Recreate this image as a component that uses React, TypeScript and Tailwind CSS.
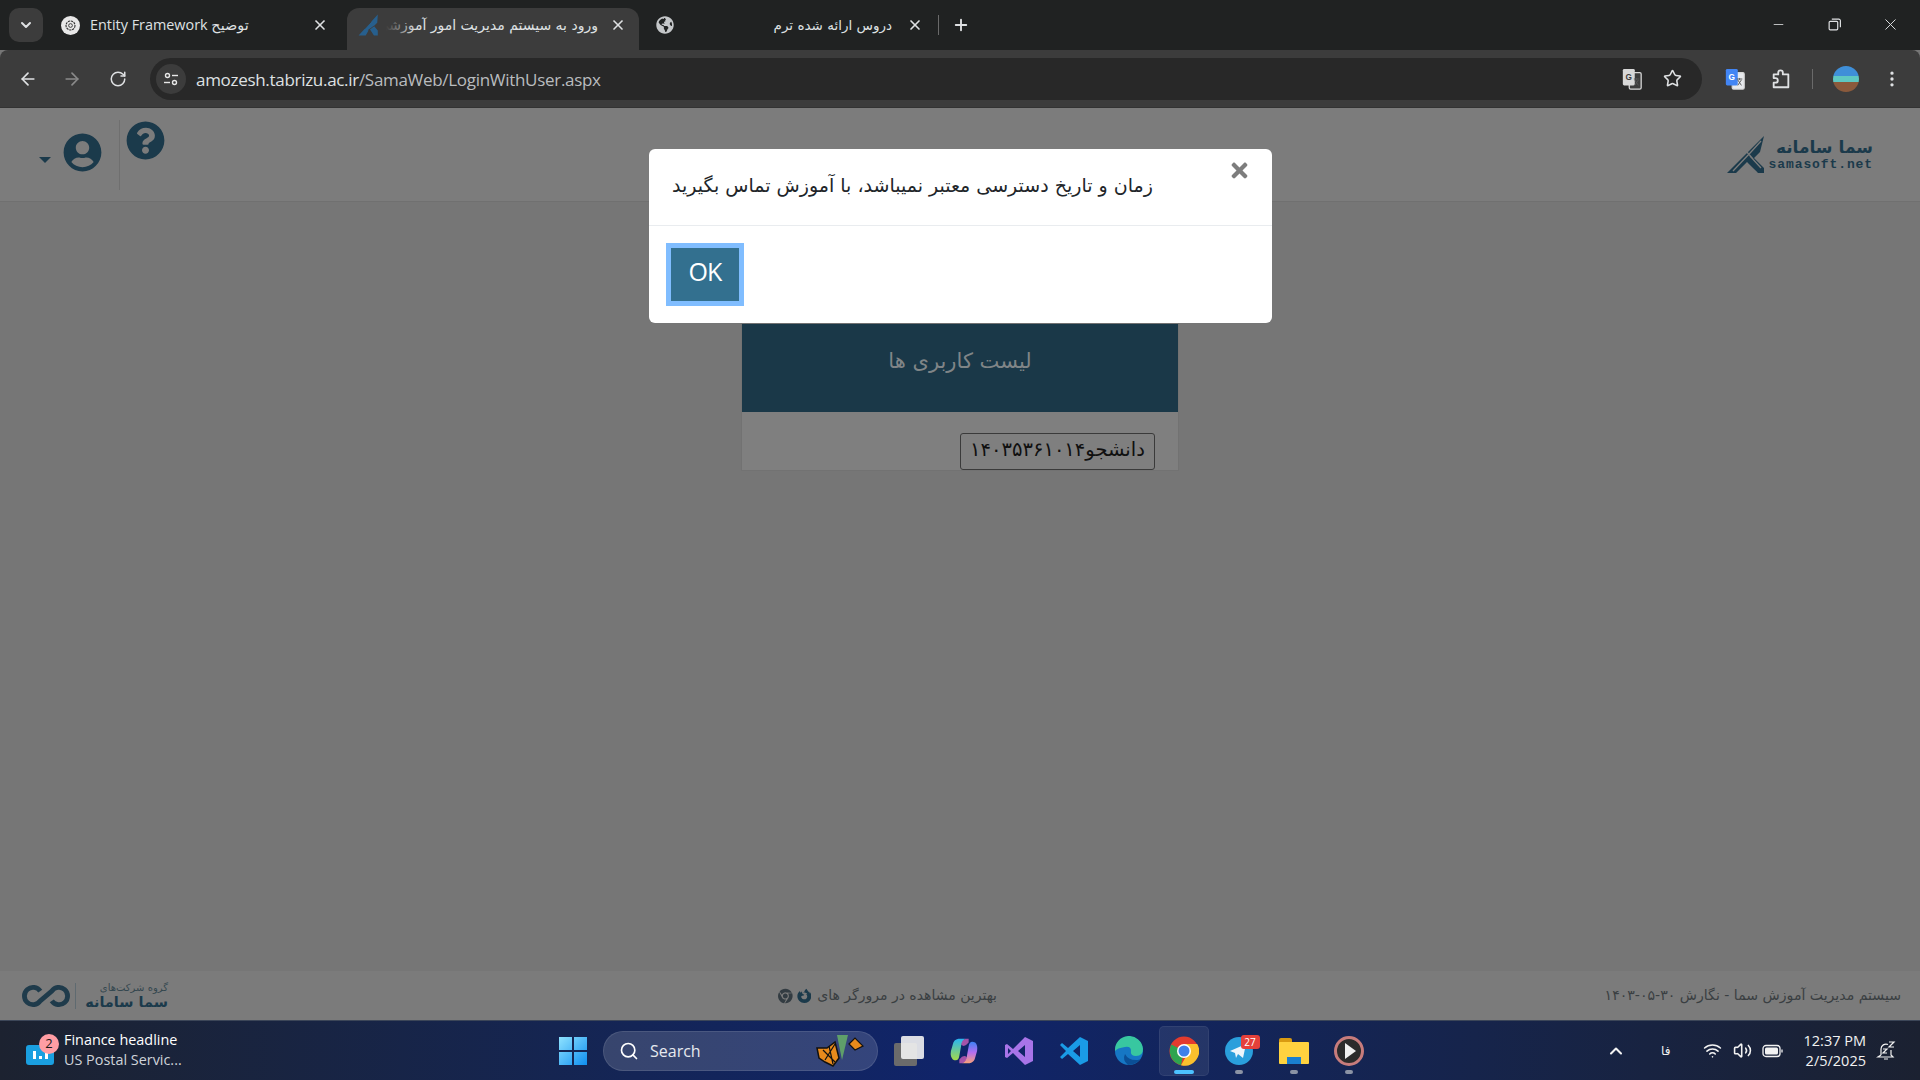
import React from "react";
import { ArrowLeft, ArrowRight, RotateCw, Star, EllipsisVertical, X, Plus, Minus, ChevronDown, ChevronUp, Wifi, Volume2, Search } from "lucide-react";
import { FaUserCircle, FaQuestionCircle, FaTimes, FaChrome, FaGlobeAmericas, FaFirefoxBrowser } from "react-icons/fa";

const fa = { fontFamily: '"DejaVu Sans", sans-serif' };
const ui = { fontFamily: '"Open Sans", "Noto Sans", sans-serif' };
const mixed = { fontFamily: '"Open Sans", "DejaVu Sans", sans-serif' };

const SamaMark = ({ color, gap }: { color: string; gap: string }) => (
  <svg viewBox="0 0 42 40" className="w-full h-full">
    <path d="M1 38 L22 17 L38 1 L34 17 L28 23 L38 33 L38 38 L32 38 L21 27 L10 38 Z" fill={color} />
    <path d="M7 36 L25 17 L35 6 M14 36 L21 29 L31 38 M24 21 L35 33 M20 16 L27 24" stroke={gap} strokeWidth="1.3" fill="none" />
  </svg>
);

const TranslateIcon = ({ blue }: { blue?: boolean }) => (
  <svg viewBox="0 0 24 24" className="w-[22px] h-[22px]">
    <rect x="9" y="5" width="13" height="18" rx="1.5" fill={blue ? "#e8eaed" : "#3c3c3c"} stroke="#d8d8d8" strokeWidth="1.4" />
    <rect x="2" y="1" width="13" height="18" rx="1.5" fill={blue ? "#4285f4" : "#d8d8d8"} />
    <text x="8.5" y="13" textAnchor="middle" fontSize="9" fontWeight="700" fill={blue ? "#fff" : "#3c3c3c"} fontFamily="Liberation Sans">G</text>
    <path d="M14 12 h6 M17 11 v2 M19 13 l-4 6 M15 13 l4 6" stroke="#555" strokeWidth="1" fill="none" />
  </svg>
);

const Dot = ({ active }: { active?: boolean }) => (
  <span className={active ? "w-[20px] h-[4px] rounded-full bg-[#4cc2ff] mt-[3px]" : "w-[8px] h-[4px] rounded-full bg-[#8b93a5] mt-[3px]"} />
);

const TaskIcon = ({ children, active, dot }: { children: React.ReactNode; active?: boolean; dot?: boolean }) => (
  <div className={"w-[50px] h-[50px] mx-[2.5px] flex flex-col items-center justify-end rounded-[5px] border " + (active ? "bg-[#ffffff14] border-[#ffffff10]" : "border-transparent")}>
    <div className="w-[30px] h-[32px] flex items-center justify-center">{children}</div>
    {active || dot ? <Dot active={active} /> : <span className="h-[7px]" />}
    <span className="h-[1px]" />
  </div>
);

export default function App() {
  return (
    <div className="relative w-[1920px] h-[1080px] overflow-hidden flex flex-col bg-[#767676]" style={ui}>
      {/* tab strip */}
      <div className="h-[50px] bg-[#202222] flex items-start text-[#dfe1e3] text-[14px]">
        <div className="ml-[9px] mt-[8px] w-[34px] h-[34px] rounded-[10px] bg-[#3c3c3c] flex items-center justify-center">
          <ChevronDown size={16} strokeWidth={3} />
        </div>
        <div className="ml-[4px] w-[300px] h-[50px] pt-[8px]">
          <div className="h-[34px] flex items-center pl-[14px]">
            <span className="w-[19px] h-[19px] rounded-full bg-[#e8e8e8] flex items-center justify-center shrink-0">
              <svg viewBox="0 0 20 20" className="w-[15px] h-[15px]"><circle cx="10" cy="10" r="6" fill="none" stroke="#333" strokeWidth="1.5" strokeDasharray="3 1" /><circle cx="10" cy="10" r="2.5" fill="none" stroke="#333" strokeWidth="1.2" /></svg>
            </span>
            <span dir="rtl" className="ml-[10px] w-[170px] text-left text-[14.4px] whitespace-nowrap" style={mixed}>توضیح Entity Framework</span>
            <X size={16} strokeWidth={2.5} className="ml-[52px] shrink-0" />
          </div>
        </div>
        <div className="w-[292px] h-[42px] mt-[8px] pb-[8px] bg-[#3c3c3c] rounded-t-[12px] flex items-center pl-[11px]">
          <svg viewBox="0 0 40 40" className="w-[22px] h-[22px] shrink-0 opacity-70">
            <path d="M1 39 L24 14 L36 1 L35 16 L29 22 L36 30 L36 39 L29 39 L21 27 L14 39 L8 39 Z" fill="#1f6fb0" />
            <path d="M12 27 L24 14 M18 30 L29 22" stroke="#3c3c3c" strokeWidth="1.5" />
          </svg>
          <div className="relative ml-[6px] w-[212px] overflow-hidden whitespace-nowrap">
            <div dir="rtl" className="text-[14px]" style={fa}>ورود به سیستم مدیریت امور آموزشی سما</div>
            <div className="absolute left-0 top-0 bottom-0 w-[30px] bg-gradient-to-r from-[#3c3c3c] to-transparent" />
          </div>
          <X size={16} strokeWidth={2.5} className="ml-[12px] shrink-0" />
        </div>
        <div className="w-[296px] h-[42px] mt-[8px] pb-[8px] flex items-center pl-[17px]">
          <FaGlobeAmericas size={18} className="text-[#c4c7c9] shrink-0" />
          <div dir="rtl" className="w-[218px] text-[13.5px] whitespace-nowrap" style={fa}>دروس ارائه شده ترم</div>
          <X size={16} strokeWidth={2.5} className="ml-[15px] shrink-0" />
        </div>
        <span className="w-px h-[20px] mt-[15px] ml-[3px] bg-[#6a6a6a]" />
        <Plus size={18} strokeWidth={2.5} className="ml-[13px] mt-[16px]" />
        <div className="ml-auto h-[50px] flex items-center pb-[2px] pr-[20px]">
          <Minus size={15} strokeWidth={1.3} className="-ml-[2px]" />
          <svg viewBox="0 0 14 14" className="w-[15px] h-[15px] ml-[41px]" fill="none" stroke="#dfe1e3" strokeWidth="1.1">
            <rect x="2" y="4" width="8" height="8" rx="1" />
            <path d="M4.5 2 H11 a1.5 1.5 0 0 1 1.5 1.5 V9.5" />
          </svg>
          <X size={19} strokeWidth={1.2} className="ml-[39px]" />
        </div>
      </div>

      {/* toolbar */}
      <div className="h-[58px] bg-[#3c3c3c] rounded-t-[8px] flex items-center text-[#dfe1e3] border-b border-[#333]">
        <ArrowLeft size={20} className="ml-[18px]" />
        <ArrowRight size={20} className="ml-[24px] text-[#8a8a8a]" />
        <RotateCw size={18} className="ml-[27px]" />
        <div className="ml-[23px] w-[1552px] h-[42px] rounded-full bg-[#282828] flex items-center pl-[6px] pr-[20px]">
          <span className="w-[30px] h-[30px] rounded-full bg-[#3c3c3c] flex items-center justify-center">
            <svg viewBox="0 0 16 16" className="w-[16px] h-[16px]" fill="none" stroke="#e8e8e8" strokeWidth="1.4">
              <circle cx="4.5" cy="4.5" r="2" /><path d="M9 4.5 H15" /><circle cx="11.5" cy="11.5" r="2" /><path d="M1 11.5 H7" />
            </svg>
          </span>
          <span className="ml-[10px] mt-[2px] text-[17px] tracking-[-0.3px]">
            amozesh.tabrizu.ac.ir<span className="text-[#b9bcbf]">/SamaWeb/LoginWithUser.aspx</span>
          </span>
          <div className="ml-auto flex items-center">
            <TranslateIcon />
            <Star size={19} className="ml-[20px]" />
          </div>
        </div>
        <div className="ml-[22px]"><TranslateIcon blue /></div>
        <svg viewBox="0 0 24 24" className="ml-[24px] w-[22px] h-[22px]" fill="none" stroke="#dfe1e3" strokeWidth="2">
          <path d="M4 7 H9 V5 a2.5 2.5 0 0 1 5 0 V7 H20 V21 H4 V16 H6 a2.5 2.5 0 0 0 0 -5 H4 Z" strokeLinejoin="round" />
        </svg>
        <span className="ml-[20px] w-px h-[20px] bg-[#6a6a6a]" />
        <span className="ml-[20px] w-[26px] h-[26px] rounded-full overflow-hidden flex flex-col shrink-0">
          <span className="h-[10px] bg-[#3f8fd8]" />
          <span className="h-[6px] bg-[#5ec8c2]" />
          <span className="flex-1 bg-[#8a5a3c]" />
        </span>
        <EllipsisVertical size={20} className="ml-[23px]" />
      </div>

      {/* page */}
      <div className="flex-1 flex flex-col bg-[#767676]">
        <header className="h-[94px] bg-[#7c7c7c] border-b border-[#707070] flex items-start">
          <div className="ml-[39px] mt-[49px] w-0 h-0 border-x-[6px] border-x-transparent border-t-[6px] border-t-[#1b3a4b]" />
          <FaUserCircle size={39} className="ml-[12px] mt-[25px] text-[#1b3a4b]" />
          <span className="ml-[17px] mt-[12px] w-px h-[70px] bg-[#6f6f6f]" />
          <FaQuestionCircle size={39} className="ml-[6px] mt-[13px] text-[#1b3a4b]" />
          <div className="ml-auto mr-[47px] mt-[25px] flex items-center h-[44px]">
            <div className="w-[42px] h-[40px]"><SamaMark color="#1b3a4b" gap="#7c7c7c" /></div>
            <div className="ml-[1px] flex flex-col items-end text-[#1b3a4b] leading-none">
              <span className="text-[17px] font-bold leading-[20px]" style={fa}>سما سامانه</span>
              <span className="text-[13px] tracking-[0.9px] font-semibold leading-[16px]" style={{ fontFamily: '"Liberation Mono", monospace' }}>samasoft.net</span>
            </div>
          </div>
        </header>

        <main className="flex-1 flex flex-col items-center">
          <div className="mt-[121px] w-[438px] bg-[#7f7f7f] border border-[#727272]">
            <div className="h-[88px] bg-[#1a3848] flex items-center justify-center pb-[13px]">
              <h1 dir="rtl" className="text-[21px] text-[#808587]" style={fa}>لیست کاربری ها</h1>
            </div>
            <div className="h-[58px] flex justify-end items-end pr-[23px]">
              <button dir="rtl" className="w-[195px] h-[37px] pb-[3px] rounded-[3px] border border-[#3a3a3a] text-[19.5px] text-[#101010] whitespace-nowrap" style={fa}>دانشجو۱۴۰۳۵۳۶۱۰۱۴</button>
            </div>
          </div>
        </main>

        <footer className="h-[49px] bg-[#7b7b7b] flex items-center text-[#3a3f42] text-[14px]">
          <div className="ml-[22px] w-[146px] flex items-center text-[#1b3a4b]">
            <svg viewBox="0 0 50 24" className="w-[48px] h-[26px]" fill="none" stroke="#1f3b4b" strokeWidth="5">
              <path d="M19 7 A9 9 0 1 0 19 17 L31 7 A9 9 0 1 1 31 17" />
            </svg>
            <span className="ml-[5px] w-px h-[26px] bg-[#5f6a70]" />
            <div dir="rtl" className="ml-[5px] flex-1 flex flex-col leading-none" style={fa}>
              <span className="text-[10px] text-[#34474f] leading-[12px] whitespace-nowrap">گروه شرکت‌های</span>
              <span className="text-[14.5px] font-bold leading-[16px] whitespace-nowrap">سما سامانه</span>
            </div>
          </div>
          <div className="ml-[610px] w-[219px] flex items-center">
            <FaChrome size={16} className="text-[#333c42]" />
            <FaFirefoxBrowser size={16} className="ml-[4px] text-[#1b3a4b]" />
            <span dir="rtl" className="ml-[6px] whitespace-nowrap" style={fa}>بهترین مشاهده در مرورگر های</span>
          </div>
          <span dir="rtl" className="ml-auto mr-[19px] text-[14.1px] whitespace-nowrap" style={fa}>سیستم مدیریت آموزش سما - نگارش ۳۰-۰۵-۱۴۰۳</span>
        </footer>
      </div>

      {/* taskbar */}
      <div className="h-[60px] bg-gradient-to-r from-[#1c2230] via-[#10246a] to-[#1b2131] border-t border-[#3c4658] flex items-center text-white relative">
        <div className="relative ml-[26px] w-[28px] h-[20px] mt-[8px] rounded-[3px] bg-[#1a9fe0] flex items-end justify-center gap-[3px] pb-[6px]">
          <span className="w-[3px] h-[8px] bg-white" /><span className="w-[3px] h-[3px] bg-white" /><span className="w-[3px] h-[6px] bg-white" />
          <span className="absolute -right-[5px] -top-[11px] w-[20px] h-[20px] rounded-full bg-[#ff9da4] text-[#1a1a1a] text-[13px] flex items-center justify-center">2</span>
        </div>
        <div className="ml-[10px] w-[122px] text-[14.4px] leading-[20px] -mt-[2px]">
          <div>Finance headline</div>
          <div className="text-[#cfd3da]">US Postal Servic...</div>
        </div>
        <svg viewBox="0 0 30 30" className="ml-[372px] w-[30px] h-[30px]">
          <defs><linearGradient id="win" x1="0" y1="0" x2="1" y2="1"><stop offset="0" stopColor="#8fe3ff" /><stop offset="1" stopColor="#0f8ff0" /></linearGradient></defs>
          <path d="M1 1 H14 V14 H1 Z M16 1 H29 V14 H16 Z M1 16 H14 V29 H1 Z M16 16 H29 V29 H16 Z" fill="url(#win)" />
        </svg>
        <div className="ml-[15px] w-[275px] h-[40px] rounded-full bg-[#ffffff26] border border-[#ffffff1a] flex items-center pl-[15px] pr-[12px]">
          <Search size={20} strokeWidth={2} />
          <span className="ml-[11px] text-[16px] text-[#e6e9ef]">Search</span>
          <svg viewBox="0 0 50 34" className="ml-auto w-[50px] h-[34px]">
            <path d="M22 1 L27 26 L33 1 Z" fill="#5f9f6a" />
            <path d="M2 14 L12 14 L20 8 L24 24 L18 32 L10 28 L4 24 Z" fill="#e88a1c" stroke="#111" strokeWidth="1.5" />
            <path d="M34 10 L40 4 L48 12 L40 16 Z" fill="#e88a1c" stroke="#111" strokeWidth="1.2" />
            <path d="M8 16 L20 28 M20 10 L10 26 M14 12 L18 30" stroke="#111" strokeWidth="1.2" />
          </svg>
        </div>
        <div className="ml-[3px] flex items-center">
          <TaskIcon>
            <span className="relative block w-[30px] h-[30px]">
              <span className="absolute left-0 bottom-0 w-[23px] h-[23px] rounded-[2px] bg-[#6b6b6b]" />
              <span className="absolute right-0 top-0 w-[23px] h-[23px] rounded-[2px] bg-[#f2f2f2] opacity-90" />
            </span>
          </TaskIcon>
          <TaskIcon>
            <svg viewBox="0 0 30 30" className="w-[28px] h-[30px]">
              <defs>
                <linearGradient id="cpa" x1="0" y1="0" x2="0" y2="1"><stop offset="0" stopColor="#29b6f2" /><stop offset="1" stopColor="#a4d84a" /></linearGradient>
                <linearGradient id="cpb" x1="0" y1="0" x2="0" y2="1"><stop offset="0" stopColor="#3b82f6" /><stop offset=".5" stopColor="#b46ef0" /><stop offset="1" stopColor="#f7a07a" /></linearGradient>
              </defs>
              <path d="M9 2 H17 Q13 3 12 9 L10 20 Q9 27 3 24 Q0 21 1 15 L3 8 Q4 3 9 2 Z" fill="url(#cpa)" />
              <path d="M21 28 H13 Q17 27 18 21 L20 10 Q21 3 27 6 Q30 9 29 15 L27 22 Q26 27 21 28 Z" fill="url(#cpb)" />
              <path d="M10 24 Q15 18 18 22 Q17 27 13 28 H10 Z M20 6 Q15 12 12 8 Q13 3 17 2 H20 Z" fill="#e668c4" opacity=".7" />
            </svg>
          </TaskIcon>
          <TaskIcon>
            <svg viewBox="0 0 30 30" className="w-[30px] h-[30px]">
              <path d="M21 1 L29 5 V25 L21 29 L9 17 L3 22 L1 21 V9 L3 8 L9 13 Z M21 9 L14 15 L21 21 Z M4 12 V18 L7 15 Z" fill="#a874e8" fillRule="evenodd" />
            </svg>
          </TaskIcon>
          <TaskIcon>
            <svg viewBox="0 0 30 30" className="w-[30px] h-[30px]">
              <path d="M21 1 L29 5 V25 L21 29 L9 18 L3 23 L1 21 L7 15 L1 9 L3 7 L9 12 Z M21 9 L14 15 L21 21 Z" fill="#1a9be6" fillRule="evenodd" />
            </svg>
          </TaskIcon>
          <TaskIcon>
            <svg viewBox="0 0 30 30" className="w-[30px] h-[30px]">
              <circle cx="15" cy="15" r="14" fill="#1677c4" />
              <path d="M1 15 A14 14 0 0 1 29 13 Q29 20 22 20 Q16 20 17 15 Q17 10 11 11 Q3 12 1 15 Z" fill="#38c7a0" />
              <path d="M14 29 Q8 24 11 18 Q14 24 22 24 Q26 24 27 22 Q23 29 14 29 Z" fill="#0b4f96" />
            </svg>
          </TaskIcon>
          <TaskIcon active>
            <svg viewBox="0 0 30 30" className="w-[30px] h-[30px]">
              <circle cx="15" cy="15" r="14.5" fill="#e33b2e" />
              <path d="M15 15 L2.4 8.5 A14.5 14.5 0 0 0 12 29.2 Z" fill="#2ea44f" />
              <path d="M15 8 H28.2 A14.5 14.5 0 0 1 12 29.2 L19 17 Z" fill="#fbc02d" />
              <circle cx="15" cy="15" r="7" fill="#fff" /><circle cx="15" cy="15" r="5.5" fill="#3f80ea" />
            </svg>
          </TaskIcon>
          <TaskIcon dot>
            <span className="relative block w-[28px] h-[28px] rounded-full bg-[#2a9fdc]">
              <svg viewBox="0 0 28 28" className="w-[28px] h-[28px]"><path d="M5 14 L21 7 L18 21 L13 17 L11 21 L10 16 Z" fill="#eef6fb" /></svg>
              <span className="absolute -right-[7px] -top-[2px] w-[19px] h-[14px] rounded-[3px] bg-[#e5403a] text-[10px] leading-[14px] text-center">27</span>
            </span>
          </TaskIcon>
          <TaskIcon dot>
            <span className="relative block w-[30px] h-[26px]">
              <span className="absolute left-0 top-0 w-[13px] h-[8px] rounded-t-[2px] bg-[#d99b12]" />
              <span className="absolute left-0 top-[4px] w-[30px] h-[22px] rounded-[1px] bg-[#ffd23f]" />
              <span className="absolute left-[8px] bottom-0 w-[14px] h-[7px] bg-[#1a7fd0]" />
            </span>
          </TaskIcon>
          <TaskIcon dot>
            <span className="w-[30px] h-[30px] rounded-full bg-[#2b2b2b] border-[3px] border-[#c77c7c] flex items-center justify-center">
              <span className="ml-[3px] w-0 h-0 border-y-[8px] border-y-transparent border-l-[11px] border-l-[#f0f0f0]" />
            </span>
          </TaskIcon>
        </div>
        <div className="ml-auto flex items-center text-[#f2f2f2] pr-[24px]">
          <ChevronUp size={20} strokeWidth={2.5} className="-mr-[2px]" />
          <span className="ml-[37px] text-[12px]" style={fa}>فا</span>
          <Wifi size={19} className="ml-[33px]" />
          <Volume2 size={19} className="ml-[11px]" />
          <svg viewBox="0 0 22 14" className="ml-[10px] w-[22px] h-[14px]" fill="none" stroke="#f2f2f2" strokeWidth="1.3">
            <rect x="1" y="1.5" width="17" height="11" rx="3" /><rect x="3" y="3.5" width="13" height="7" rx="1.5" fill="#f2f2f2" stroke="none" /><path d="M20 5.5 V8.5" />
          </svg>
          <div className="ml-[19px] text-[14.5px] leading-[20px] text-right">
            <div>12:37 PM</div>
            <div>2/5/2025</div>
          </div>
          <svg viewBox="0 0 20 20" className="ml-[10px] w-[20px] h-[20px]" fill="none" stroke="#f2f2f2" strokeWidth="1.2">
            <path d="M5 14 V8 a5 5 0 0 1 7 -4.5 M15 9 V14 L17 16 H2 L5 14 M8 18 h4" />
            <path d="M13 1 h5 l-5 5 h5 M7 8 h4 l-4 4 h4" />
          </svg>
        </div>
      </div>

      {/* alert dialog */}
      <div className="absolute left-[649px] top-[149px] w-[623px] h-[174px] bg-white rounded-[6px] flex flex-col">
        <div className="h-[77px] border-b border-[#e9ecef] flex items-start justify-between pl-[23px] pr-[21px]">
          <p dir="rtl" className="mt-[22px] text-[19px] text-[#212529] whitespace-nowrap" style={fa}>زمان و تاریخ دسترسی معتبر نمیباشد، با آموزش تماس بگیرید</p>
          <FaTimes size={23} className="mt-[10px] text-[#7d7d7d]" />
        </div>
        <div className="flex-1 flex items-start pl-[22px] pt-[22px]">
          <button className="w-[68px] h-[53px] pb-[5px] bg-[#33708f] ring-[5px] ring-[#80bdff] text-white text-[25px] tracking-[-1px]">OK</button>
        </div>
      </div>
    </div>
  );
}
